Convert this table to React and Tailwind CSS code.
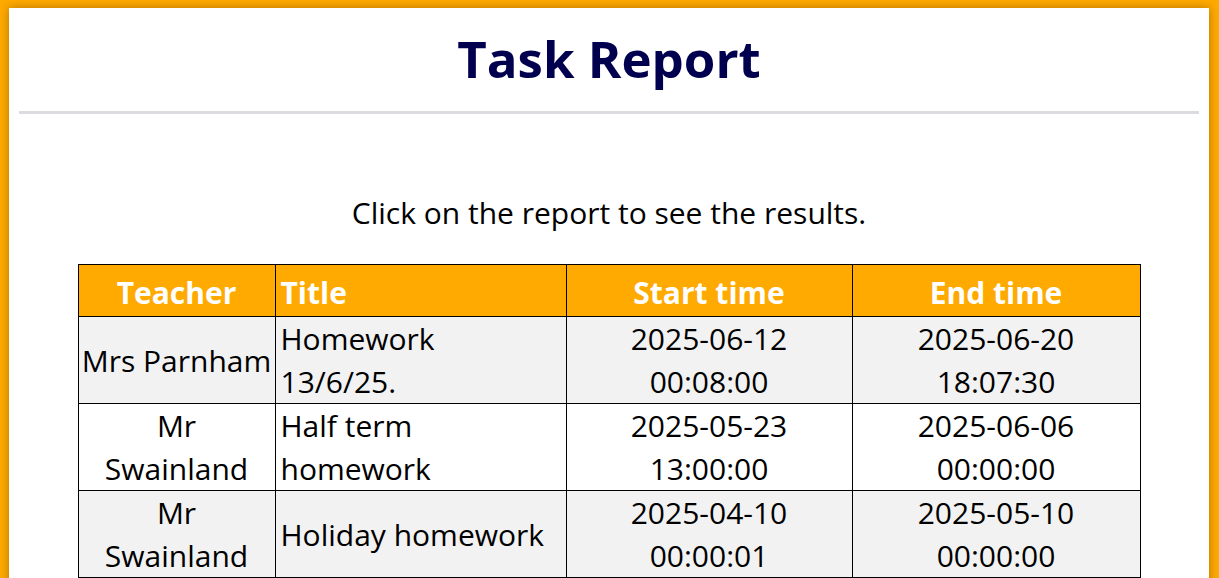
const rows = [
  { teacher: ["Mrs Parnham"], title: "Homework 13/6/25.", start: ["2025-06-12", "00:08:00"], end: ["2025-06-20", "18:07:30"] },
  { teacher: ["Mr", "Swainland"], title: "Half term homework", start: ["2025-05-23", "13:00:00"], end: ["2025-06-06", "00:00:00"] },
  { teacher: ["Mr", "Swainland"], title: "Holiday homework", start: ["2025-04-10", "00:00:01"], end: ["2025-05-10", "00:00:00"] },
];

export default function App() {
  return (
    <div className="min-h-screen bg-[#ffaa00] pt-2 pl-[9px] pr-[10px] font-['Open_Sans',sans-serif]">
      <div className="bg-white min-h-[570px] shadow-[0_0_9px_rgba(110,60,0,0.5)] pb-10">
        <h1 className="text-[51px] font-bold text-[#00004f] text-center leading-[70px] pt-[15px] pb-[18px]">
          Task Report
        </h1>
        <div className="mx-[10px] h-[3px] bg-[#dcdce0]" />
        <p className="mt-[81px] text-center text-[30px] leading-[36px] text-black">
          Click on the report to see the results.
        </p>
        <table className="mt-[33px] mx-auto w-[1062px] table-fixed border-collapse text-[30px] leading-[43px] text-black">
          <colgroup>
            <col className="w-[197px]" />
            <col className="w-[291px]" />
            <col className="w-[286px]" />
            <col className="w-[288px]" />
          </colgroup>
          <thead>
            <tr className="bg-[#ffaa00] text-white font-bold">
              <th className="border border-black pt-[6px] pb-[2px] text-center text-[30px]">Teacher</th>
              <th className="border border-black pt-[6px] pb-[2px] pl-[5px] text-left text-[30px]">Title</th>
              <th className="border border-black pt-[6px] pb-[2px] text-center text-[30px]">Start time</th>
              <th className="border border-black pt-[6px] pb-[2px] text-center text-[30px]">End time</th>
            </tr>
          </thead>
          <tbody>
            {rows.map((r, i) => (
              <tr key={i} className={i % 2 === 0 ? "bg-[#f2f2f2]" : "bg-white"}>
                <td className="border border-black text-center whitespace-nowrap">
                  {r.teacher.map((t, j) => (
                    <div key={j}>{t}</div>
                  ))}
                </td>
                <td className="border border-black pl-[5px] pr-[20px]">{r.title}</td>
                <td className="border border-black text-center">
                  {r.start[0]}
                  <br />
                  {r.start[1]}
                </td>
                <td className="border border-black text-center">
                  {r.end[0]}
                  <br />
                  {r.end[1]}
                </td>
              </tr>
            ))}
          </tbody>
        </table>
      </div>
    </div>
  );
}
